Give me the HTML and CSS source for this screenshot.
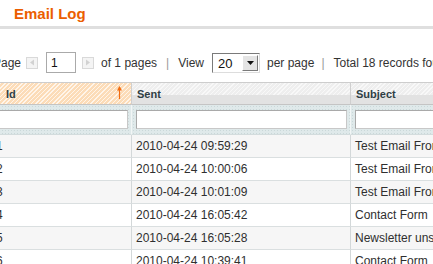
FILE: index.html
```html
<!DOCTYPE html>
<html lang="en">
<head>
    <meta charset="UTF-8">
    <meta name="viewport" content="width=device-width, initial-scale=1.0">
    <title>Email Log</title>
    <link rel="stylesheet" href="styles.css">
</head>
<body>
    <div class="content-header">
        <h3 class="head-title">Email Log</h3>
    </div>

    <div class="grid-wrap">
        <div class="pager">
            <span class="pager-label">Page</span>
            <span class="pager-arrow prev">
                <svg width="6" height="7" viewBox="0 0 6 7"><path d="M5 0.5 L1 3.5 L5 6.5 Z" fill="#d2d2d2"/></svg>
            </span>
            <input class="page-input" type="text" value="1">
            <span class="pager-arrow next">
                <svg width="6" height="7" viewBox="0 0 6 7"><path d="M1 0.5 L5 3.5 L1 6.5 Z" fill="#d2d2d2"/></svg>
            </span>
            <span class="pager-of">of 1 pages</span>
            <span class="sep">|</span>
            <span class="pager-view">View</span>
            <span class="limit-select">
                <span class="limit-value">20</span>
                <span class="limit-btn">
                    <svg width="7" height="4" viewBox="0 0 7 4"><path d="M0 0 H7 L3.5 4 Z" fill="#111"/></svg>
                </span>
            </span>
            <span class="pager-per">per page</span>
            <span class="sep sep-2">|</span>
            <span class="pager-total">Total 18 records found</span>
        </div>

        <table class="grid">
            <thead>
                <tr class="headings">
                    <th class="col-id sort-on">
                        <span class="th-inner">
                            <span>Id</span>
                            <svg class="sort-arrow" width="5" height="13" viewBox="0 0 5 13">
                                <path d="M2.5 1 V13" stroke="#f26c0f" stroke-width="1.2"/>
                                <path d="M0 4.5 L2.5 0 L5 4.5 Z" fill="#f26c0f"/>
                            </svg>
                        </span>
                    </th>
                    <th class="col-sent">Sent</th>
                    <th class="col-subject">Subject</th>
                </tr>
                <tr class="filter">
                    <th><input class="filter-input" type="text"></th>
                    <th><input class="filter-input" type="text"></th>
                    <th><input class="filter-input" type="text"></th>
                </tr>
            </thead>
            <tbody>
                <tr class="odd"><td>1</td><td>2010-04-24 09:59:29</td><td>Test Email From Store</td></tr>
                <tr><td>2</td><td>2010-04-24 10:00:06</td><td>Test Email From Store</td></tr>
                <tr class="odd"><td>3</td><td>2010-04-24 10:01:09</td><td>Test Email From Store</td></tr>
                <tr><td>4</td><td>2010-04-24 16:05:42</td><td>Contact Form</td></tr>
                <tr class="odd"><td>5</td><td>2010-04-24 16:05:28</td><td>Newsletter unsubscription</td></tr>
                <tr><td>6</td><td>2010-04-24 10:39:41</td><td>Contact Form</td></tr>
            </tbody>
        </table>
    </div>
</body>
</html>
```

FILE: styles.css
```css
body {
    font-family: Arial, "Liberation Sans", Helvetica, sans-serif;
    font-size: 12px;
    color: #2f2f2f;
    margin: 0;
    overflow: hidden;
}
.content-header {
    padding: 5px 14px 3px;
    border-bottom: 3px solid #dfdfdf;
}
.head-title {
    margin: 0;
    font-size: 15px;
    line-height: 18px;
    font-weight: bold;
    color: #eb5e00;
}
.pager {
    display: flex;
    align-items: center;
    height: 21px;
    margin: 23px 0 0 -7px;
    white-space: nowrap;
    color: #333;
}
.pager > * {
    flex-shrink: 0;
}
.pager-arrow {
    display: flex;
    align-items: center;
    justify-content: center;
    width: 10px;
    height: 10px;
    border: 1px solid #d9d9d9;
    background: #f4f4f4;
    margin-left: 5px;
}
.pager-arrow.next {
    margin-left: 6px;
}
.page-input {
    box-sizing: border-box;
    width: 30px;
    height: 21px;
    margin: 0 0 0 8px;
    padding: 0 4px;
    border: 1px solid #aaa;
    font: 12px Arial, "Liberation Sans", sans-serif;
    color: #111;
}
.pager-of {
    margin-left: 7px;
}
.sep {
    margin-left: 9px;
    color: #999;
}
.pager-view {
    margin-left: 9px;
}
.limit-select {
    display: flex;
    box-sizing: border-box;
    width: 48px;
    height: 20px;
    margin-left: 8px;
    border: 1px solid #7a7a7a;
    border-right-color: #ddd;
    border-bottom-color: #ddd;
    background: #fff;
}
.limit-value {
    flex: 1;
    padding: 2px 0 0 5px;
    font-size: 13px;
    color: #111;
}
.limit-btn {
    display: flex;
    align-items: center;
    justify-content: center;
    width: 14px;
    margin: 1px;
    background: #e4e4e4;
    border-right: 1px solid #7a7a7a;
    border-bottom: 1px solid #7a7a7a;
    border-top: 1px solid #fff;
    border-left: 1px solid #fff;
}
.pager-per {
    margin-left: 7px;
}
.sep-2 {
    margin-left: 7px;
}
.pager-total {
    margin-left: 9px;
}

/* grid */
.grid {
    border-collapse: separate;
    border-spacing: 0;
    table-layout: fixed;
    width: 660px;
    margin: 9px 0 0 -8px;
}
.grid th,
.grid td {
    box-sizing: border-box;
    text-align: left;
    border-right: 1px solid #d3d8d9;
}
.headings th {
    height: 23px;
    padding: 0 4px 0 5px;
    font-size: 11px;
    font-weight: bold;
    color: #2f3e45;
    border-top: 1px solid #cdcdcd;
    border-bottom: 1px solid #c4c4c4;
    border-right-color: #cfcfcf;
    background-color: #e2e2e2;
    background-image: repeating-linear-gradient(135deg, #f8f8f8 0 1px, #eeeeee 1px 3px);
    background-size: 100% 12px;
    background-repeat: no-repeat;
}
.headings .sort-on {
    padding-left: 14px;
    padding-right: 9px;
    background-color: #fde6cb;
    background-image: repeating-linear-gradient(135deg, #fff5ea 0 1px, #fcdcb8 1px 3px);
    background-size: 100% 100%;
}
.col-id {
    width: 140px;
}
.col-sent {
    width: 219px;
}
.th-inner {
    display: flex;
    align-items: center;
    justify-content: space-between;
}
.sort-arrow {
    display: block;
    margin-top: -2px;
}
.filter th {
    height: 30px;
    padding: 5px 3px 5px 4px;
    border-right-color: #f2f6f6;
    border-bottom: 1px solid #d3dcdd;
    background-color: #dfe9ea;
    background-image: radial-gradient(#cad8d9 0.7px, transparent 0.9px);
    background-size: 3px 3px;
}
.filter-input {
    display: block;
    box-sizing: border-box;
    width: 100%;
    height: 19px;
    margin: 0;
    border: 1px solid #a9a9a9;
    border-right-color: #c8c8c8;
    border-bottom-color: #c8c8c8;
    background: #fff;
}
.grid td {
    height: 23px;
    padding: 0 4px;
    font-size: 12px;
    white-space: nowrap;
    overflow: hidden;
    border-bottom: 1px solid #dadfe0;
    background: #fff;
}
.grid tr.odd td {
    background: #f6f6f6;
}
```
